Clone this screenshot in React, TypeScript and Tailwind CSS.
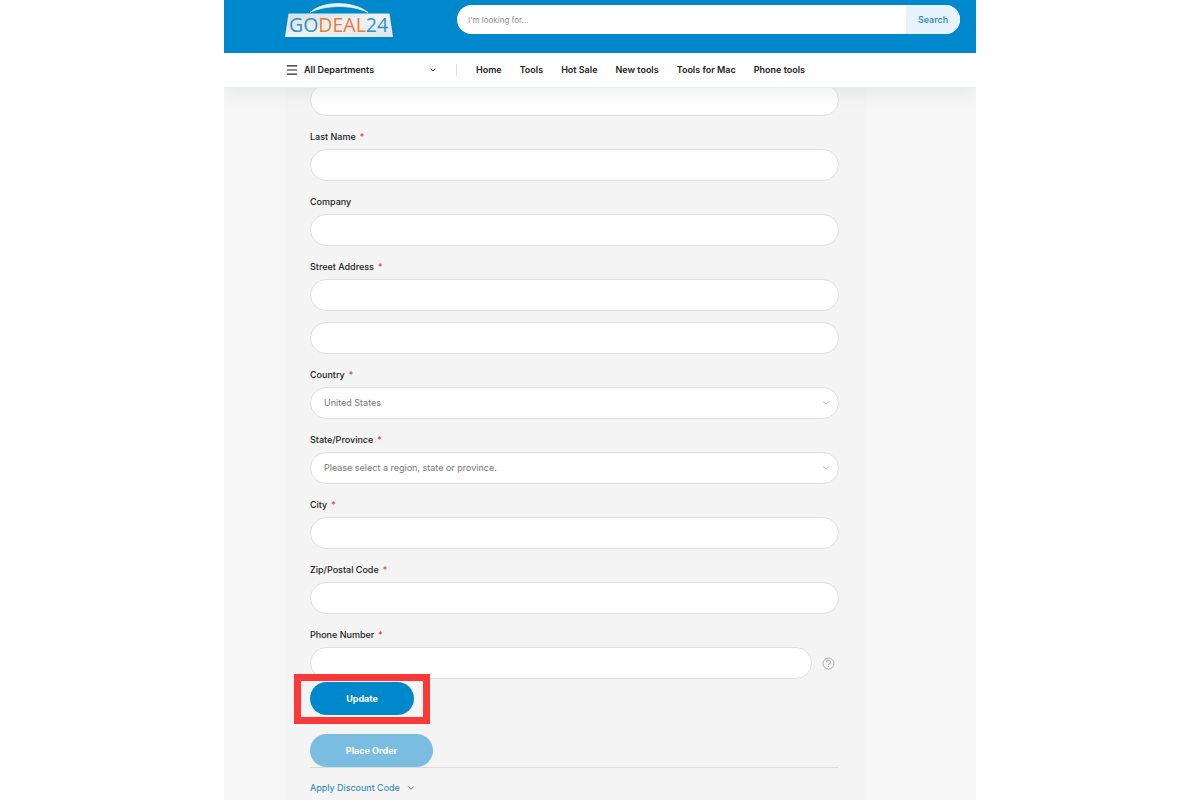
import React, { useState } from 'react';
import { ChevronDown, Menu } from 'lucide-react';

const navLinks = ['Home', 'Tools', 'Hot Sale', 'New tools', 'Tools for Mac', 'Phone tools'];

const boxClass =
  'block h-8 w-full rounded-full border border-[#dfdfdf] bg-white px-[13px] text-[9px] text-[#777] outline-none focus:border-[#0088cc]';

function Logo() {
  return (
    <svg width="108" height="36" viewBox="0 0 108 36" role="img" aria-label="GODEAL24">
      <defs>
        <linearGradient id="plate" x1="0" y1="0" x2="1" y2="1">
          <stop offset="0" stopColor="#d3dee4" />
          <stop offset="0.5" stopColor="#eef2f3" />
          <stop offset="1" stopColor="#dde5e9" />
        </linearGradient>
      </defs>
      <path d="M25 10.500 C38 -1.500 68 -1.500 83 10.500 C67 2.500 41 2.500 25 10.500 Z" fill="#e6f4fb" stroke="#e6f4fb" strokeWidth="0.8" />
      <path d="M3.500 11.500 H104.500 L108 35 H0 Z" fill="url(#plate)" />
      <text x="4" y="30" fontFamily="'Open Sans', sans-serif" fontSize="19.500" fill="#2f8fca">
        GO<tspan fill="#ee7a35">DEAL</tspan>24
      </text>
    </svg>
  );
}

function FieldLabel({ id, text, required }: { id: string; text: string; required?: boolean }) {
  return (
    <label htmlFor={id} className="mb-1 mt-[13px] block text-[9px] font-medium leading-4 text-[#222]">
      {text}
      {required && <span className="ml-1 font-normal text-[#e02b27]">*</span>}
    </label>
  );
}

function TextField({ id, text, required }: { id: string; text: string; required?: boolean }) {
  return (
    <div>
      <FieldLabel id={id} text={text} required={required} />
      <input id={id} type="text" className={boxClass} />
    </div>
  );
}

function SelectField({ id, text, options }: { id: string; text: string; options: string[] }) {
  return (
    <div>
      <FieldLabel id={id} text={text} required />
      <div className="relative">
        <select id={id} className={`${boxClass} appearance-none`}>
          {options.map((option) => (
            <option key={option}>{option}</option>
          ))}
        </select>
        <ChevronDown className="pointer-events-none absolute right-2 top-[11px] size-2.5 text-[#aaa]" />
      </div>
    </div>
  );
}

export default function App() {
  const [search, setSearch] = useState('');

  return (
    <div className="min-h-screen bg-white font-['Inter',sans-serif]">
      <div className="mx-auto flex min-h-screen w-full max-w-[752px] flex-col overflow-hidden bg-[#f6f6f6]">
        <header className="relative z-10 shadow-[0_4px_20px_rgba(0,0,0,0.07)]">
          <div className="flex h-[53px] items-start bg-[#0088cc] pl-[61px] pr-4">
            <a href="#" className="mt-0.5 shrink-0">
              <Logo />
            </a>
            <form
              className="ml-16 mt-[5px] flex h-[29px] flex-1 overflow-hidden rounded-full bg-white"
              onSubmit={(e) => e.preventDefault()}
            >
              <input
                type="search"
                aria-label="Search"
                placeholder="I'm looking for..."
                value={search}
                onChange={(e) => setSearch(e.target.value)}
                className="min-w-0 flex-1 px-[11px] text-[8px] text-[#555] outline-none placeholder:text-[#8c8c8c]"
              />
              <button type="submit" className="w-[54px] bg-[#e6f3fa] text-[9px] font-medium text-[#1787c8]">
                Search
              </button>
            </form>
          </div>
          <nav className="flex h-[35px] items-center border-b border-[#e2eef5] bg-white pl-[61px] text-[9px] font-semibold text-[#222]">
            <button type="button" className="flex w-[152px] items-center">
              <Menu className="size-3.5" />
              <span className="ml-[5px]">All Departments</span>
              <ChevronDown className="ml-auto size-2" strokeWidth={3} />
            </button>
            <span className="ml-[19px] h-3 w-px bg-[#ddd]" />
            <ul className="ml-[19px] flex gap-[18px] whitespace-nowrap">
              {navLinks.map((link) => (
                <li key={link}>
                  <a href="#">{link}</a>
                </li>
              ))}
            </ul>
          </nav>
        </header>

        <main className="ml-[61px] mr-[110px] flex-1 bg-[#f4f4f4] pl-[25px] pr-[27px]">
          <form onSubmit={(e) => e.preventDefault()}>
            <input type="text" aria-label="First Name" className={`${boxClass} -mt-1`} />
            <TextField id="last-name" text="Last Name" required />
            <TextField id="company" text="Company" />
            <TextField id="street" text="Street Address" required />
            <input type="text" aria-label="Street Address Line 2" className={`${boxClass} mt-[11px]`} />
            <SelectField id="country" text="Country" options={['United States', 'Canada']} />
            <SelectField
              id="state"
              text="State/Province"
              options={['Please select a region, state or province.', 'California', 'New York']}
            />
            <TextField id="city" text="City" required />
            <TextField id="zip" text="Zip/Postal Code" required />
            <FieldLabel id="phone" text="Phone Number" required />
            <div className="flex items-center">
              <input id="phone" type="tel" className={boxClass} />
              <button type="button" aria-label="Help" className="ml-2.5 mr-1 shrink-0 text-[#aaa]">
                <svg width="13" height="13" viewBox="0 0 13 13" fill="none" stroke="currentColor">
                  <circle cx="6.500" cy="6.500" r="5.500" />
                  <path d="M4.500 5.300 a2 1.900 0 1 1 3 1.500 Q6.500 7.300 6.500 8.100 M6.500 9.100 v1" strokeWidth="1.200" />
                </svg>
              </button>
            </div>

            {/* Highlighted update button */}
            <div className="relative -ml-4 -mt-[5px] w-fit border-[7px] border-[#fb3939] px-[9px] pb-0.5 pt-px">
              <button type="submit" className="block h-[33px] w-[104px] rounded-full bg-[#0088cc] text-[9px] font-bold text-white">
                Update
              </button>
            </div>

            <div className="mt-2.5 border-b border-[#dcdcdc]">
              <button
                type="button"
                disabled
                className="block h-[33px] w-[123px] rounded-full bg-[#7abde0] text-[9px] font-bold text-white"
              >
                Place Order
              </button>
            </div>
          </form>

          <button type="button" className="mt-3 flex items-center text-[9px] leading-4 text-[#1b80c4]">
            Apply Discount Code
            <ChevronDown className="ml-1.5 size-2.5 text-[#555]" />
          </button>
        </main>
      </div>
    </div>
  );
}
